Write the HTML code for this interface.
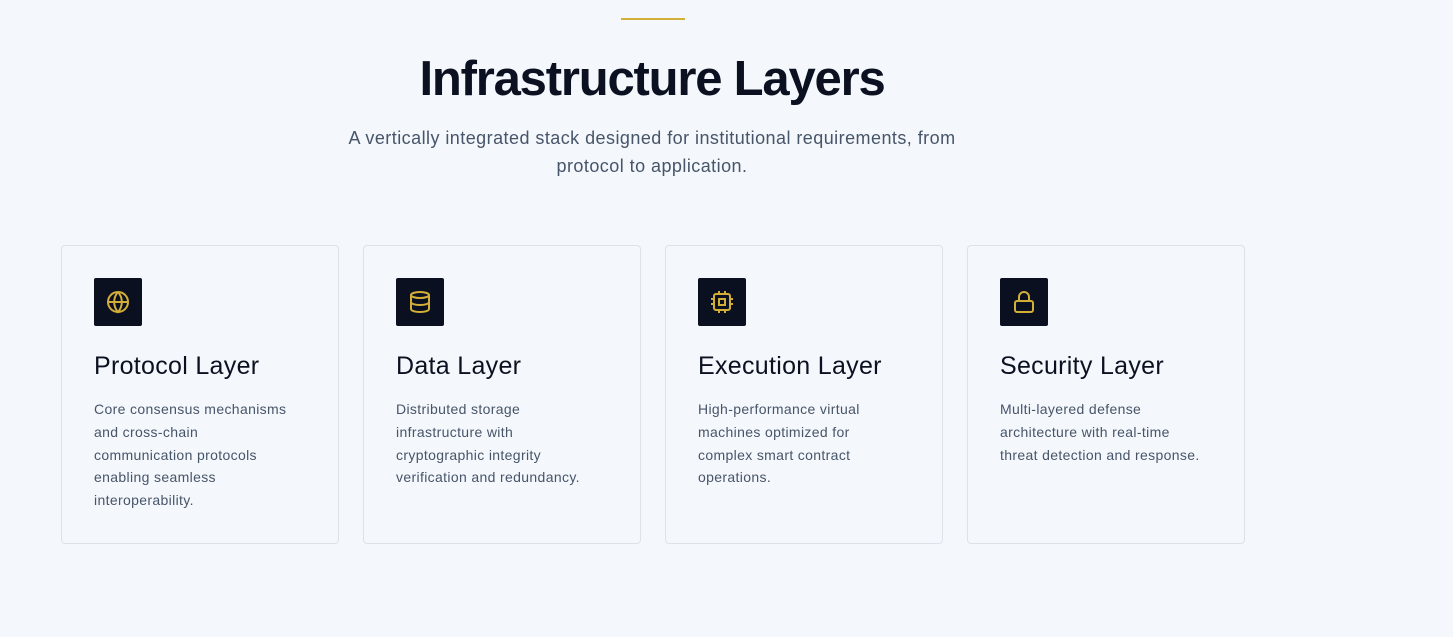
<!DOCTYPE html>
<html><head><meta charset="utf-8"><style>
*{margin:0;padding:0;box-sizing:border-box}
body{width:1453px;height:637px;background:#f4f7fb;font-family:"Liberation Sans",sans-serif;position:relative;overflow:hidden}
.line{position:absolute;left:621px;top:18px;width:64px;height:2px;background:#d4af37}
h1{position:absolute;left:0;width:1304px;top:49px;text-align:center;font-size:49px;font-weight:700;color:#0b1120;letter-spacing:-1.2px;line-height:60px}
.sub{position:absolute;left:322px;width:660px;top:124px;text-align:center;font-size:18px;line-height:28px;color:#475569;letter-spacing:0.45px}
.card{position:absolute;top:245px;width:278px;height:299px;border:1px solid #dde2ea;border-radius:4px;background:#f4f7fb}
.ic{position:absolute;left:32px;top:32px;width:48px;height:48px;background:#0a1020;border-radius:2px;display:flex;align-items:center;justify-content:center}
.card h3{position:absolute;left:32px;top:106px;font-size:25px;font-weight:400;color:#0b1120;letter-spacing:0.3px;white-space:nowrap}
.card p{position:absolute;left:32px;top:152px;width:200px;font-size:14px;line-height:22.8px;color:#475569;letter-spacing:0.35px}
</style></head><body>
<div class="line"></div>
<h1>Infrastructure Layers</h1>
<div class="sub">A vertically integrated stack designed for institutional requirements, from protocol to application.</div>

<div class="card" style="left:61px"><div class="ic"><svg width="24" height="24" viewBox="0 0 24 24" fill="none" stroke="#d4af37" stroke-width="2"><circle cx="12" cy="12" r="10"/><path d="M2 12h20M12 2a15 15 0 0 1 0 20a15 15 0 0 1 0-20"/></svg></div><h3>Protocol Layer</h3><p>Core consensus mechanisms and cross-chain communication protocols enabling seamless interoperability.</p></div>

<div class="card" style="left:363px"><div class="ic"><svg width="24" height="24" viewBox="0 0 24 24" fill="none" stroke="#d4af37" stroke-width="2"><ellipse cx="12" cy="5" rx="9" ry="3"/><path d="M3 5v14c0 1.7 4 3 9 3s9-1.3 9-3V5M3 12c0 1.7 4 3 9 3s9-1.3 9-3"/></svg></div><h3>Data Layer</h3><p>Distributed storage infrastructure with cryptographic integrity verification and redundancy.</p></div>

<div class="card" style="left:665px"><div class="ic"><svg width="24" height="24" viewBox="0 0 24 24" fill="none" stroke="#d4af37" stroke-width="2"><rect x="4" y="4" width="16" height="16" rx="2"/><rect x="9" y="9" width="6" height="6"/><path d="M9 1v3M15 1v3M9 20v3M15 20v3M20 9h3M20 14h3M1 9h3M1 14h3"/></svg></div><h3>Execution Layer</h3><p>High-performance virtual machines optimized for complex smart contract operations.</p></div>

<div class="card" style="left:967px"><div class="ic"><svg width="24" height="24" viewBox="0 0 24 24" fill="none" stroke="#d4af37" stroke-width="2"><rect x="3" y="11" width="18" height="11" rx="2"/><path d="M7 11V7a5 5 0 0 1 10 0v4"/></svg></div><h3>Security Layer</h3><p>Multi-layered defense architecture with real-time threat detection and response.</p></div>
</body></html>
